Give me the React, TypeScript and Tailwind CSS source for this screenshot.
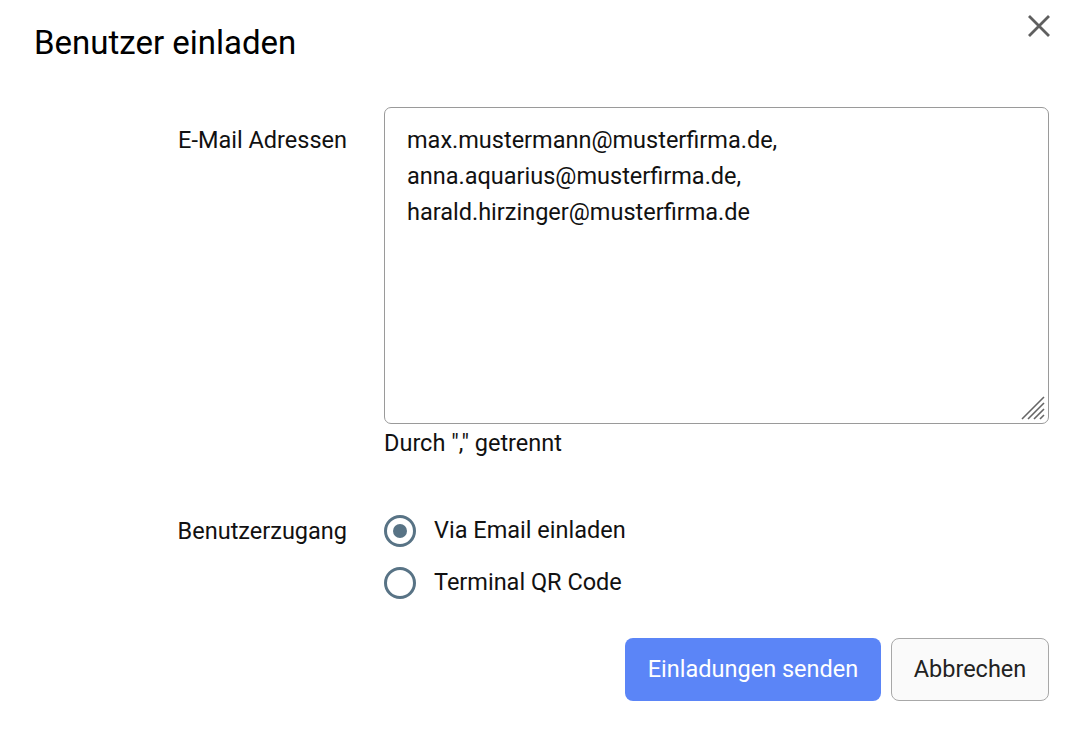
import { useState } from "react";

const emails =
  "max.mustermann@musterfirma.de,\nanna.aquarius@musterfirma.de,\nharald.hirzinger@musterfirma.de";

const Radio = ({ checked, label, onClick }: { checked: boolean; label: string; onClick: () => void }) => (
  <button type="button" onClick={onClick} className="flex items-center gap-[18px] h-[36px]">
    <span className="w-[32px] h-[32px] rounded-full border-[3px] border-[#587385] flex items-center justify-center">
      {checked && <span className="w-[14px] h-[14px] rounded-full bg-[#587385]" />}
    </span>
    <span className="text-[23.5px] text-[#111]">{label}</span>
  </button>
);

export default function App() {
  const [access, setAccess] = useState<"email" | "qr">("email");
  const [value, setValue] = useState(emails);

  return (
    <div className="relative w-[1082px] h-[732px] bg-white px-[33px] pt-[25px] font-['Roboto',sans-serif] text-[#111]">
      <h1 className="text-[33px] leading-[36px] text-black ml-[1px]">Benutzer einladen</h1>
      <button type="button" className="absolute right-[31px] top-[14px] text-[#5f5f5f]">
        <svg width="24" height="24" viewBox="0 0 24 24">
          <path d="M2 2 L22 22 M22 2 L2 22" stroke="currentColor" strokeWidth="2.8" />
        </svg>
      </button>

      <div className="flex mt-[46px] gap-[37px]">
        <label className="w-[314px] text-right text-[23.5px] leading-[36px] pt-[15px]">E-Mail Adressen</label>
        <div className="flex-1">
          <div className="relative">
            <textarea
              value={value}
              onChange={(e) => setValue(e.target.value)}
              className="block w-full h-[317px] border border-[#9a9a9a] rounded-[7px] px-[22px] pt-[14px] text-[23.5px] leading-[36px] text-[#111] outline-none resize-none"
            />
            <svg className="absolute right-[3px] bottom-[3px]" width="26" height="26" viewBox="0 0 26 26">
              <path
                d="M2 24 L24 2 M8 24 L24 8 M14 24 L24 14 M20 24 L24 20"
                stroke="#666"
                strokeWidth="1.6"
              />
            </svg>
          </div>
          <p className="mt-[7px] text-[23.5px] leading-[24px]">Durch "," getrennt</p>
        </div>
      </div>

      <div className="flex mt-[58px] gap-[37px]">
        <label className="w-[314px] text-right text-[23.5px] leading-[36px]">Benutzerzugang</label>
        <div className="flex flex-col gap-[16px]">
          <Radio checked={access === "email"} label="Via Email einladen" onClick={() => setAccess("email")} />
          <Radio checked={access === "qr"} label="Terminal QR Code" onClick={() => setAccess("qr")} />
        </div>
      </div>

      <div className="flex justify-end gap-[10px] mt-[37px]">
        <button className="h-[63px] w-[256px] rounded-[8px] bg-[#5b85f7] text-white text-[23.5px]">
          Einladungen senden
        </button>
        <button className="h-[63px] w-[158px] rounded-[8px] bg-[#fafafa] border border-[#a8a8a8] text-[#222] text-[23.5px]">
          Abbrechen
        </button>
      </div>
    </div>
  );
}
